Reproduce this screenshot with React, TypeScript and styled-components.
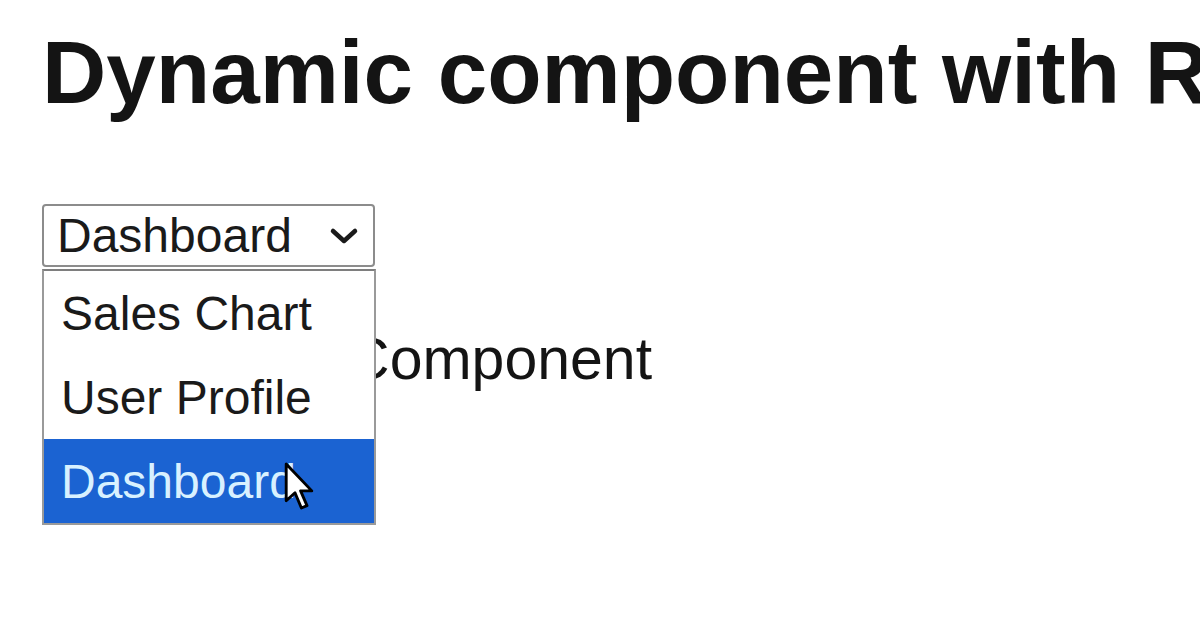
import React from "react";
import styled, { createGlobalStyle } from "styled-components";

const GlobalStyle = createGlobalStyle`
  html, body {
    margin: 0;
    padding: 0;
    background: #ffffff;
    overflow: hidden;
  }
  body {
    font-family: "Liberation Sans", Arial, sans-serif;
    color: #111111;
  }
`;

const Page = styled.div`
  width: 1200px;
  height: 628px;
  padding: 21px 0 0 42px;
  box-sizing: border-box;
  overflow: hidden;
`;

const Title = styled.h1`
  margin: 0;
  font-size: 89px;
  font-weight: 700;
  white-space: nowrap;
  color: #141414;
`;

const Picker = styled.div`
  position: relative;
  margin-top: 80px;
  width: 333px;
`;

const SelectBox = styled.div`
  height: 63px;
  box-sizing: border-box;
  border: 2px solid #8c8c8c;
  border-radius: 4px;
  display: flex;
  align-items: center;
  justify-content: space-between;
  padding: 0 14px 0 13px;
  font-size: 48px;
  color: #1a1a1a;
`;

const Chevron = styled.svg`
  width: 30px;
  height: 20px;
`;

const Menu = styled.ul`
  position: absolute;
  top: 65px;
  left: 0;
  width: 334px;
  margin: 0;
  padding: 0;
  list-style: none;
  box-sizing: border-box;
  border: 2px solid #9a9a9a;
  border-top-color: #7e7e7e;
  background: #ffffff;
  z-index: 2;
`;

const Option = styled.li<{ $active?: boolean }>`
  position: relative;
  height: 84px;
  display: flex;
  align-items: center;
  padding-left: 17px;
  font-size: 48px;
  color: ${(p) => (p.$active ? "#d8f1ff" : "#1a1a1a")};
  background: ${(p) => (p.$active ? "#1b63d2" : "transparent")};
`;

const Pointer = styled.svg`
  position: absolute;
  left: 239px;
  top: 23px;
  width: 32px;
  height: 52px;
`;

const Content = styled.p`
  margin: 58px 0 0;
  font-size: 59px;
  color: #141414;
`;

const options = ["Sales Chart", "User Profile", "Dashboard"];

export default function App(): React.ReactElement {
  const selected = "Dashboard";

  return (
    <>
      <GlobalStyle />
      <Page>
        <Title>Dynamic component with React</Title>
        <Picker>
          <SelectBox>
            <span>{selected}</span>
            <Chevron viewBox="0 0 30 20">
              <path
                d="M4 5 L15 15 L26 5"
                fill="none"
                stroke="#1a1a1a"
                strokeWidth="4.5"
                strokeLinecap="round"
                strokeLinejoin="round"
              />
            </Chevron>
          </SelectBox>
          <Menu>
            {options.map((item) => (
              <Option key={item} $active={item === selected}>
                {item}
                {item === selected && (
                  <Pointer viewBox="0 0 20 32">
                    <path
                      d="M2 1 L2 24 L7.5 19 L11.5 28.5 L15 27 L11 17.8 L18 17.8 Z"
                      fill="#ffffff"
                      stroke="#000000"
                      strokeWidth="1.8"
                      strokeLinejoin="round"
                    />
                  </Pointer>
                )}
              </Option>
            ))}
          </Menu>
        </Picker>
        <Content>{selected} Component</Content>
      </Page>
    </>
  );
}
